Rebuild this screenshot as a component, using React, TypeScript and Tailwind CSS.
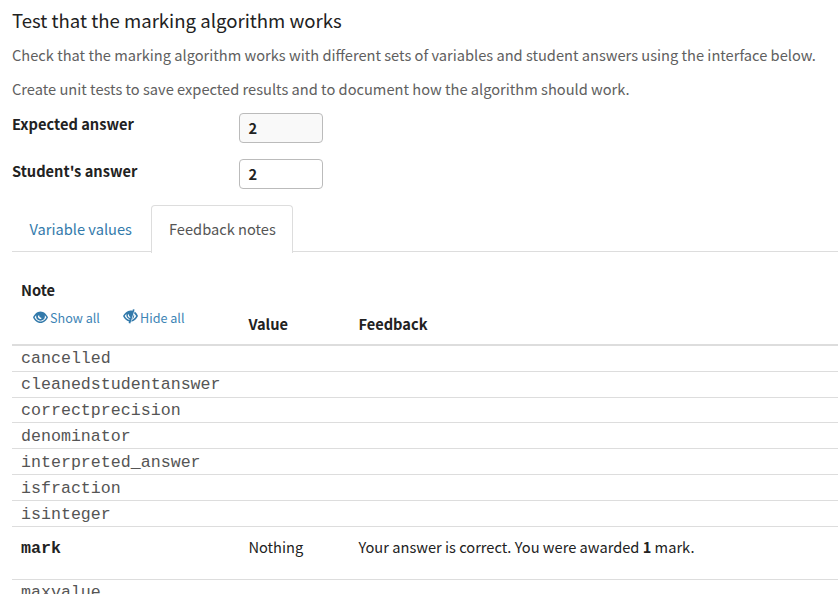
import React from "react";

const notes = [
  { name: "cancelled", size: "h-[26px] leading-[25px]" },
  { name: "cleanedstudentanswer", size: "h-[26px] leading-[25px]" },
  { name: "correctprecision", size: "h-[25px] leading-[25px]" },
  { name: "denominator", size: "h-[26px] leading-[27px]" },
  { name: "interpreted_answer", size: "h-[26px] leading-[27px]" },
  { name: "isfraction", size: "h-[26px] leading-[27px]" },
  { name: "isinteger", size: "h-[26px] leading-[27px]" },
];

function EyeOpen() {
  return (
    <svg className="h-[13px] w-[15px] shrink-0" viewBox="0 0 15 13" fill="currentColor">
      <path
        fillRule="evenodd"
        d="M7.5 0.4C11 0.4 13.6 3.2 15 6.2C13.6 9.3 11 12 7.5 12C4 12 1.4 9.3 0 6.2C1.4 3.2 4 0.4 7.5 0.4ZM3.3 4.2C2.6 4.8 2 5.5 1.6 6.2C2.8 8.6 4.9 10.4 7.5 10.4C10.1 10.4 12.2 8.6 13.4 6.2C13 5.5 12.4 4.8 11.7 4.2C11.9 4.7 11.9 5.1 11.9 5.6C11.9 8 9.9 9.7 7.5 9.7C5.1 9.7 3.1 8 3.1 5.6C3.1 5.1 3.1 4.7 3.3 4.2ZM6.1 4.1L4.9 5.2C4.9 6.8 6.1 8 7.6 8C7.9 8 8.2 7.9 8.4 7.8L8.3 6.8C7.1 6.9 6.1 5.9 6.1 4.1Z"
      />
    </svg>
  );
}

function EyeClosed() {
  return (
    <svg className="h-[15px] w-[15px] shrink-0" viewBox="0 0 15 15" fill="currentColor">
      <path
        fillRule="evenodd"
        d="M9.9 0.2L11.6 0.6L7.3 14.5L5.6 14.1L6 12.6C3.5 12 1.3 9.8 0 7.1C1.6 4 4.2 1.5 7.5 1.5C8.2 1.5 8.9 1.6 9.5 1.8ZM3.4 5.1C2.7 5.7 2.1 6.4 1.7 7.1C2.7 9 4.3 10.4 6.3 10.9L6.5 10.2C4.2 9.6 3 7.4 3.4 5.1ZM6 4.9L4.8 6.1C4.8 7.6 5.6 8.7 7.1 8.9L7.4 8C6.2 7.5 5.7 6.2 6 4.9Z"
      />
      <path d="M11.7 2.5C13.2 3.6 14.3 5.4 15 7.1C13.6 10.1 11.4 12.3 8.2 12.8L8.8 11C10.8 10.3 12.2 8.9 13.1 7.1C12.6 6.1 12 5.3 11.1 4.6Z" />
      <path d="M10.9 5.2C11.7 7 10.8 9.1 9.2 9.9Z" />
    </svg>
  );
}

export default function App() {
  return (
    <main className="h-[594px] w-[838px] overflow-hidden bg-white pl-3 font-['Noto_Sans_CJK_SC',sans-serif] text-[14.65px] leading-6 text-[#222]">
      <h3 className="h-[43px] pt-2 text-[18.6px] leading-6 whitespace-nowrap">Test that the marking algorithm works</h3>
      <p className="h-[34px] leading-6 whitespace-nowrap text-[#606060]">
        Check that the marking algorithm works with different sets of variables and student answers using the interface below.
      </p>
      <p className="h-9 leading-6 whitespace-nowrap text-[#606060]">
        Create unit tests to save expected results and to document how the algorithm should work.
      </p>
      <div className="flex h-[46px] font-bold">
        <label className="w-[227px] leading-[22px]">Expected answer</label>
        <div className="h-[30px] w-[84px] rounded-[4px] border border-[#bbb] bg-[#f9f9f9] px-[8.5px] leading-[28px]">2</div>
      </div>
      <div className="flex h-[46px] font-bold">
        <label className="w-[227px] leading-6">Student's answer</label>
        <div className="h-[30px] w-[84px] rounded-[4px] border border-[#bbb] px-[8.5px] leading-[28px]">2</div>
      </div>
      <div className="flex h-[47px] whitespace-nowrap">
        <div className="w-[139px] border-b border-[#ddd] pt-3 pl-[17.5px] text-[#337aab]">Variable values</div>
        <div className="-mb-px w-[142px] rounded-t-[4px] border-x border-t border-[#ddd] pt-[11px] pl-[17px] text-[#555]">Feedback notes</div>
        <div className="flex-1 border-b border-[#ddd]" />
      </div>
      <section className="pt-[25px]">
        <div className="flex h-[69px] border-b-2 border-[#ddd]">
          <div className="w-[236px] pl-[9px]">
            <div className="h-[29px] pt-px font-bold">Note</div>
            <div className="flex gap-[22px] pl-[11.5px] text-[12.6px] text-[#3d84b5]">
              <span className="flex h-6 w-[68px] gap-[2.5px] whitespace-nowrap"><span className="pt-[5px] text-[#337aab]"><EyeOpen /></span>Show all</span>
              <span className="flex h-6 gap-[2.5px] whitespace-nowrap"><span className="pt-[3px] text-[#337aab]"><EyeClosed /></span>Hide all</span>
            </div>
          </div>
          <div className="w-[110px] pt-[35px] pl-[0.4px] font-bold">Value</div>
          <div className="pt-[35px] pl-[0.4px] font-bold">Feedback</div>
        </div>
        {notes.map((note) => (
          <div
            key={note.name}
            className={`${note.size} border-b border-[#ddd] pl-[9px] font-['Liberation_Mono',monospace] text-[16.64px] text-[#555]`}
          >
            {note.name}
          </div>
        ))}
        <div className="flex h-[53px] border-b border-[#ddd] pt-[9px] pl-[9px]">
          <div className="w-[227px] font-['Liberation_Mono',monospace] text-[16.64px] leading-[25px] font-bold">mark</div>
          <div className="w-[110px] pl-[0.4px] leading-[22px]">Nothing</div>
          <div className="pl-[0.4px] leading-[22px] whitespace-nowrap">Your answer is correct. You were awarded <b>1</b> mark.</div>
        </div>
        <div className="pl-[9px] font-['Liberation_Mono',monospace] text-[16.64px] leading-[25px] text-[#555]">maxvalue</div>
      </section>
    </main>
  );
}
